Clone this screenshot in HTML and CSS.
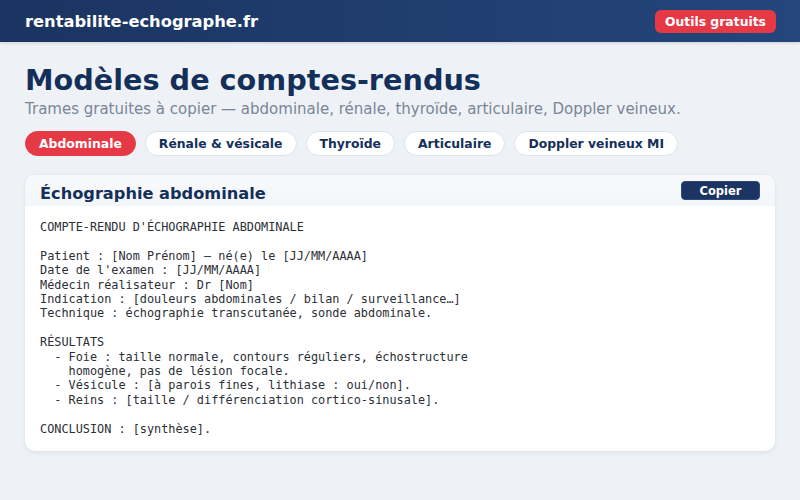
FILE: index.html
```html
<!DOCTYPE html>
<html lang="fr">

<head>
    <meta charset="UTF-8">
    <meta name="viewport" content="width=device-width, initial-scale=1.0">
    <title>Modèles de comptes-rendus — rentabilite-echographe.fr</title>
    <link rel="stylesheet" href="styles.css">
</head>

<body>
    <header class="topbar">
        <a class="logo" href="#">rentabilite-echographe.fr</a>
        <a class="btn-tools" href="#">Outils gratuits</a>
    </header>

    <main class="page">
        <h1>Modèles de comptes-rendus</h1>
        <p class="lead">Trames gratuites à copier — abdominale, rénale, thyroïde, articulaire, Doppler veineux.</p>

        <nav class="tabs">
            <button class="tab active">Abdominale</button>
            <button class="tab">Rénale &amp; vésicale</button>
            <button class="tab">Thyroïde</button>
            <button class="tab">Articulaire</button>
            <button class="tab">Doppler veineux MI</button>
        </nav>

        <section class="card">
            <div class="card-head">
                <h2>Échographie abdominale</h2>
                <button class="btn-copy">Copier</button>
            </div>
<pre class="report">COMPTE-RENDU D'ÉCHOGRAPHIE ABDOMINALE

Patient : [Nom Prénom] — né(e) le [JJ/MM/AAAA]
Date de l'examen : [JJ/MM/AAAA]
Médecin réalisateur : Dr [Nom]
Indication : [douleurs abdominales / bilan / surveillance…]
Technique : échographie transcutanée, sonde abdominale.

RÉSULTATS
  - Foie : taille normale, contours réguliers, échostructure
    homogène, pas de lésion focale.
  - Vésicule : [à parois fines, lithiase : oui/non].
  - Reins : [taille / différenciation cortico-sinusale].

CONCLUSION : [synthèse].</pre>
        </section>
    </main>
</body>

</html>
```

FILE: styles.css
```css
body {
    margin: 0;
    background-color: #eef2f6;
    font-family: 'DejaVu Sans', sans-serif;
    color: #14305a;
}

.topbar {
    display: flex;
    align-items: center;
    justify-content: space-between;
    height: 42px;
    padding: 0 24px 0 25px;
    background: linear-gradient(90deg, #1b3461, #24467c);
    box-shadow: 0 1px 3px rgba(0, 0, 0, 0.15);
}

.logo {
    color: white;
    font-weight: bold;
    font-size: 16.3px;
    text-decoration: none;
}

.btn-tools {
    background-color: #e63946;
    color: white;
    font-weight: bold;
    font-size: 12.4px;
    line-height: 15px;
    text-decoration: none;
    padding: 4px 10px;
    border-radius: 6px;
}

.page {
    padding: 20px 25px;
}

h1 {
    margin: 0;
    font-size: 28.7px;
    line-height: 36px;
    color: #14305a;
}

.lead {
    margin: 2px 0 0;
    font-size: 15px;
    line-height: 18px;
    color: #7a8599;
}

.tabs {
    display: flex;
    gap: 9px;
    margin-top: 13px;
}

.tab {
    font-family: inherit;
    font-weight: bold;
    font-size: 12.4px;
    line-height: 15px;
    color: #14305a;
    background: white;
    border: 1px solid #dde3ea;
    border-radius: 13px;
    padding: 4px 13px;
    cursor: pointer;
}

.tab.active {
    background-color: #e63946;
    border-color: #e63946;
    color: white;
}

.card {
    margin-top: 19px;
    background: white;
    border-radius: 10px;
    box-shadow: 0 1px 4px rgba(20, 48, 90, 0.1);
    overflow: hidden;
}

.card-head {
    display: flex;
    align-items: center;
    justify-content: space-between;
    height: 31px;
    padding: 0 15px;
    background: linear-gradient(180deg, #f8f9fb, #f3f6f9);
}

h2 {
    margin: 6px 0 0;
    font-size: 16.2px;
}

.btn-copy {
    font-family: inherit;
    font-weight: bold;
    font-size: 11.5px;
    color: white;
    background-color: #1b3461;
    border: 1px solid #2c4a7c;
    border-radius: 4px;
    width: 79px;
    height: 19px;
    padding: 0;
    cursor: pointer;
}

.report {
    margin: 0;
    padding: 14px 15px 15px;
    font-family: 'DejaVu Sans Mono', monospace;
    font-size: 11.85px;
    line-height: 14.4px;
    color: #2b2f36;
}
```
